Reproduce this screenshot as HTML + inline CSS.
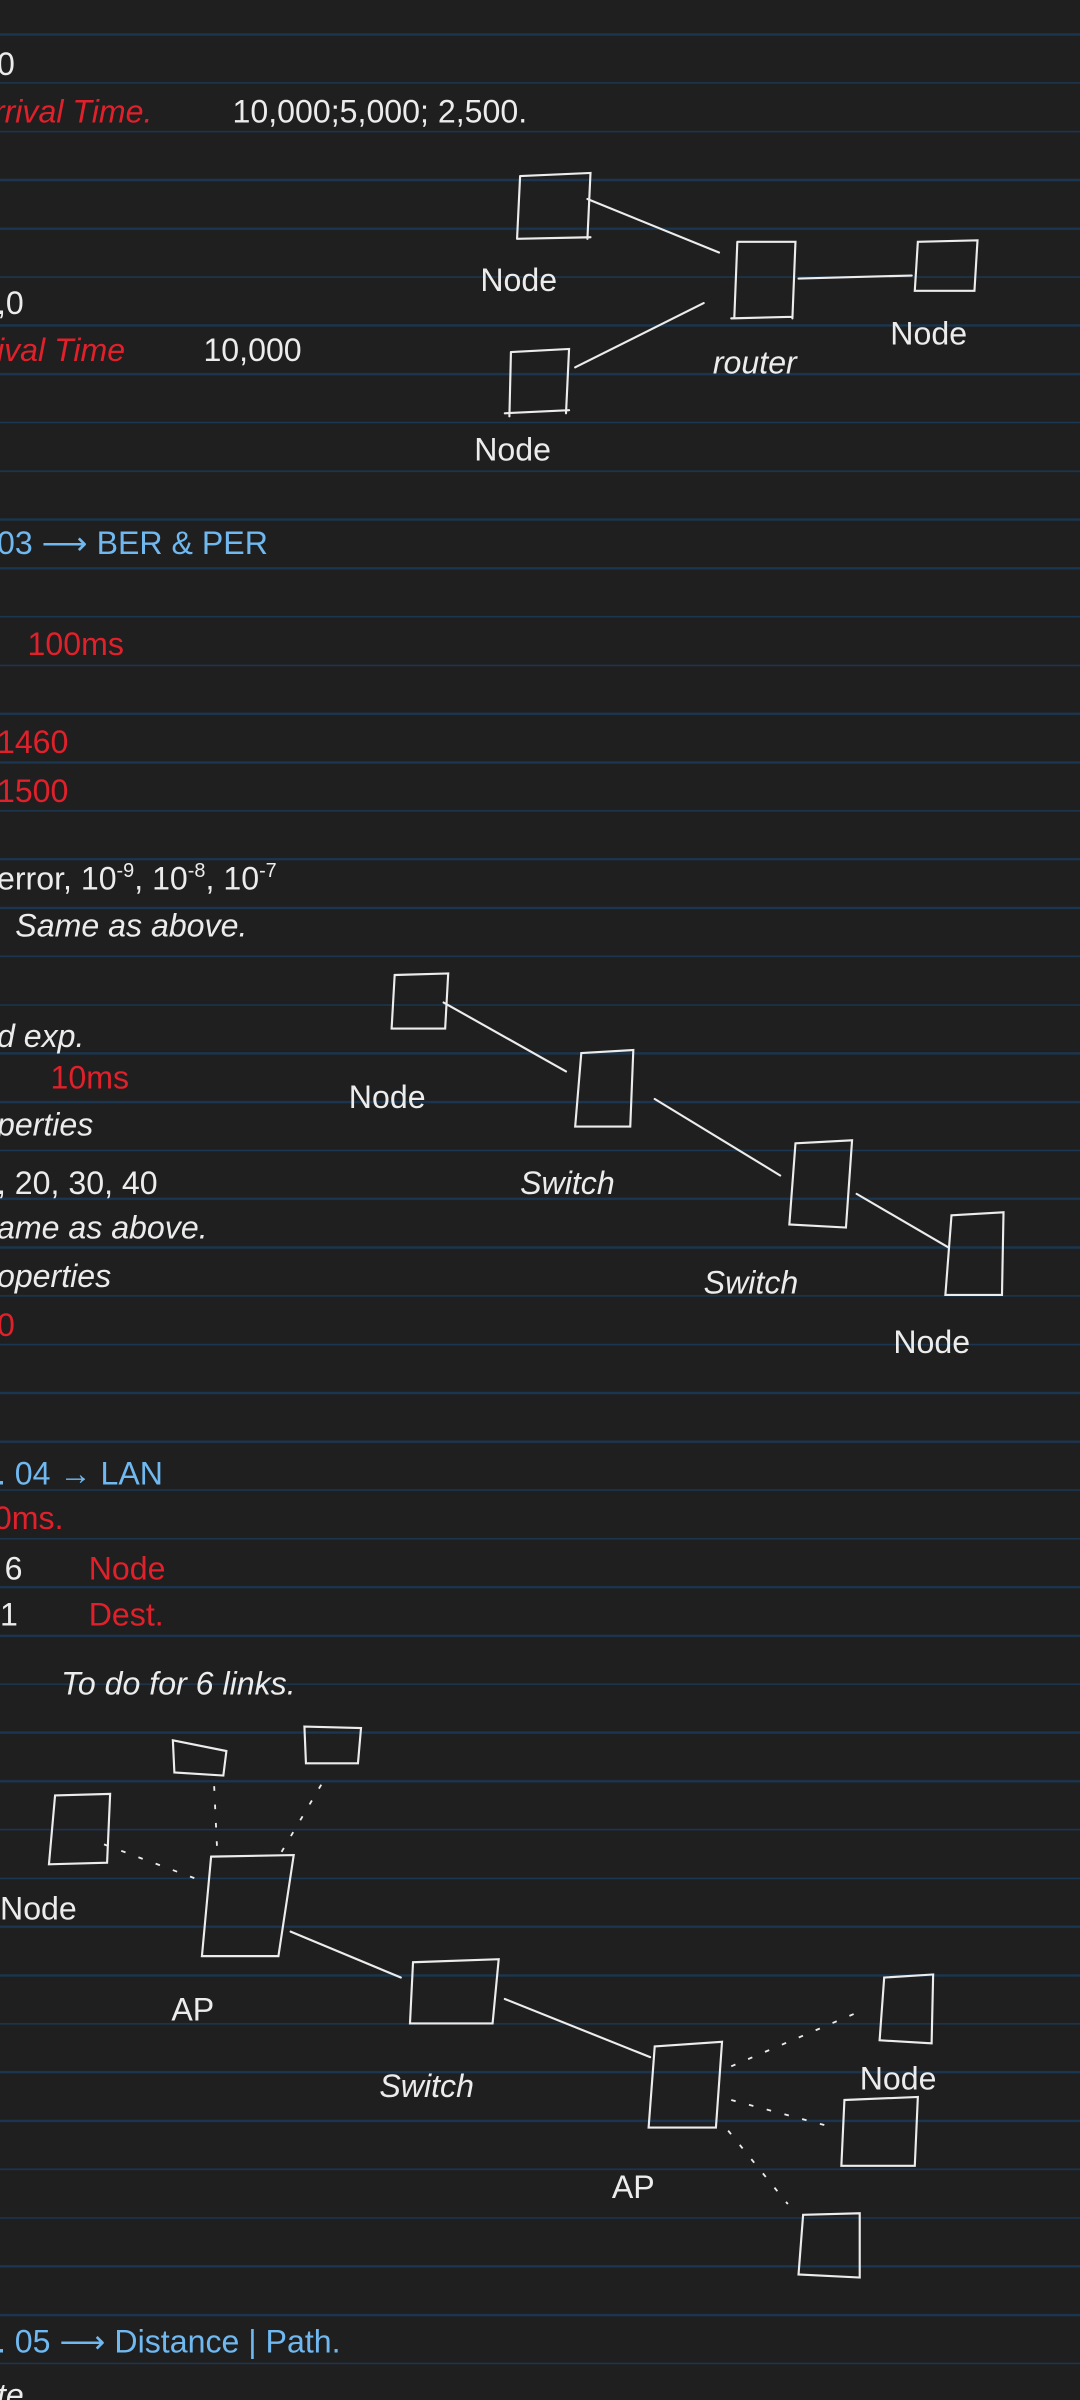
<!DOCTYPE html>
<html><head><meta charset="utf-8"><style>
html,body{margin:0;padding:0;}
body{width:1080px;height:2400px;overflow:hidden;background-color:#1f1f1f;
background-image:repeating-linear-gradient(to bottom,transparent 0,transparent 46.5px,#1b3650 46.5px,#1b3650 48.52px);
background-position:0 -13px;}
svg{position:absolute;left:0;top:0;}
text{font-family:"Liberation Sans",sans-serif;font-size:21px;}
.w{fill:#ececec}.r{fill:#e0202a}.b{fill:#70b8f0}
.s{stroke:#ececec;stroke-width:1.4;fill:none;stroke-linecap:round}
.d{stroke:#ececec;stroke-width:1.2;fill:none;stroke-dasharray:3 9}
</style></head><body>
<svg width="1080" height="2400" viewBox="0 0 706 1568" preserveAspectRatio="none">
<text class="w" x="-2" y="49">0</text>
<text class="r" x="-4" y="80" font-style="italic">rrival Time.</text>
<text class="w" x="152" y="80">10,000;5,000; 2,500.</text>
<text class="w" x="-2" y="205">,0</text>
<text class="r" x="-2" y="236" font-style="italic">ival Time</text>
<text class="w" x="133" y="236">10,000</text>
<path class="s" d="M340 115 L386 113 L384 156 M338 156 L386 155 M340 115 L338 156"/>
<text class="w" x="314" y="190">Node</text>
<path class="s" d="M384 130 L470 165"/>
<path class="s" d="M482 158 L520 158 L518 208 M478 208 L518 207 M482 158 L480 208"/>
<text class="w" x="466" y="244" font-style="italic">router</text>
<path class="s" d="M522 182 L596 180"/>
<path class="s" d="M600 158 L639 157 L637 190 L598 190 Z"/>
<text class="w" x="582" y="225">Node</text>
<path class="s" d="M334 230 L372 228 L370 270 M330 270 L372 268 M334 230 L333 272"/>
<path class="s" d="M376 240 L460 198"/>
<text class="w" x="310" y="301">Node</text>
<text class="b" x="-2" y="362">03 ⟶  BER &amp; PER</text>
<text class="r" x="18" y="428">100ms</text>
<text class="r" x="-2" y="492">1460</text>
<text class="r" x="-2" y="524">1500</text>
<text class="w" x="-2" y="581">error, 10<tspan dy="-8" font-size="13">-9</tspan><tspan dy="8">, 10</tspan><tspan dy="-8" font-size="13">-8</tspan><tspan dy="8">, 10</tspan><tspan dy="-8" font-size="13">-7</tspan></text>
<text class="w" x="10" y="612" font-style="italic">Same as above.</text>
<text class="w" x="-2" y="684" font-style="italic">d exp.</text>
<text class="r" x="33" y="711">10ms</text>
<text class="w" x="-2" y="742" font-style="italic">perties</text>
<text class="w" x="-2" y="780">, 20, 30, 40</text>
<text class="w" x="-2" y="809" font-style="italic">ame as above.</text>
<text class="w" x="-2" y="841" font-style="italic">operties</text>
<text class="r" x="-2" y="873">0</text>
<path class="s" d="M258 637 L293 636 L291 672 L256 672 Z"/>
<text class="w" x="228" y="724">Node</text>
<path class="s" d="M290 655 L370 700"/>
<path class="s" d="M380 688 L414 686 L412 736 L376 736 Z"/>
<text class="w" x="340" y="780" font-style="italic">Switch</text>
<path class="s" d="M428 718 L510 768"/>
<path class="s" d="M520 747 L557 745 L553 802 L516 800 Z"/>
<text class="w" x="460" y="845" font-style="italic">Switch</text>
<path class="s" d="M560 780 L620 815"/>
<path class="s" d="M622 794 L656 792 L655 846 L618 846 Z"/>
<text class="w" x="584" y="884">Node</text>
<text class="b" x="-2" y="970">. 04 → LAN</text>
<text class="r" x="-4" y="999">0ms.</text>
<text class="w" x="3" y="1032">6</text><text class="r" x="58" y="1032">Node</text>
<text class="w" x="0" y="1062">1</text><text class="r" x="58" y="1062">Dest.</text>
<text class="w" x="40" y="1107" font-size="18" font-style="italic">To do for 6 links.</text>
<path class="s" d="M113 1137 L148 1144 L146 1160 L114 1158 Z"/>
<path class="s" d="M199 1128 L236 1129 L234 1152 L200 1152 Z"/>
<path class="s" d="M36 1173 L72 1172 L70 1217 L32 1218 Z"/>
<text class="w" x="0" y="1254">Node</text>
<path class="d" d="M68 1205 L135 1230"/>
<path class="d" d="M140 1167 L142 1210"/>
<path class="d" d="M210 1166 L184 1210"/>
<path class="s" d="M138 1213 L192 1212 L182 1278 L132 1278 Z"/>
<text class="w" x="112" y="1320">AP</text>
<path class="s" d="M190 1262 L262 1292"/>
<path class="s" d="M270 1282 L326 1280 L322 1322 L268 1322 Z"/>
<text class="w" x="248" y="1370" font-style="italic">Switch</text>
<path class="s" d="M330 1306 L425 1344"/>
<path class="s" d="M428 1337 L472 1334 L468 1390 L424 1390 Z"/>
<text class="w" x="400" y="1436">AP</text>
<path class="d" d="M478 1350 L560 1315"/>
<path class="d" d="M478 1372 L545 1390"/>
<path class="d" d="M476 1392 L515 1440"/>
<path class="s" d="M578 1292 L610 1290 L609 1335 L575 1333 Z"/>
<text class="w" x="562" y="1365">Node</text>
<path class="s" d="M552 1372 L600 1370 L598 1415 L550 1415 Z"/>
<path class="s" d="M525 1447 L562 1446 L562 1488 L522 1486 Z"/>
<text class="b" x="-2" y="1537">. 05  ⟶  Distance | Path.</text>
<text class="w" x="-2" y="1572" font-style="italic">te</text>
</svg>
</body></html>
